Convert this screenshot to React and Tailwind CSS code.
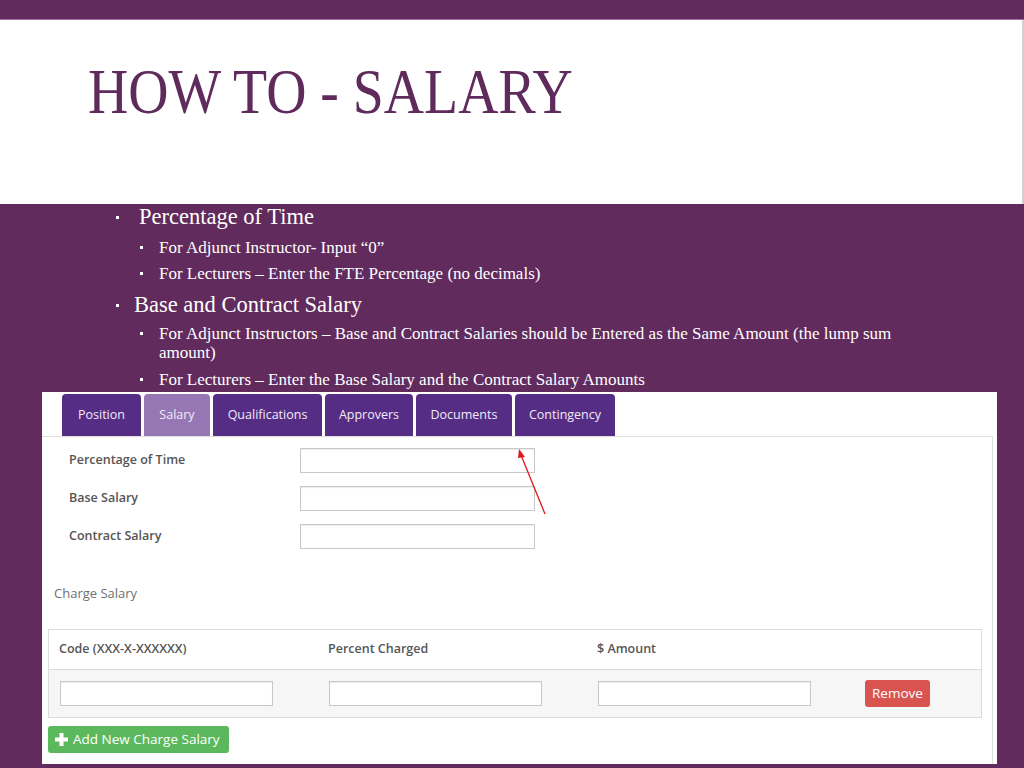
import React from 'react';

const serif = { fontFamily: '"Liberation Serif", "Times New Roman", serif' };
const sans = { fontFamily: '"Open Sans", "Noto Sans", sans-serif' };

const TABS = [
  { label: 'Position', w: 'w-[79px]' },
  { label: 'Salary', w: 'w-[66px]', active: true },
  { label: 'Qualifications', w: 'w-[109px]' },
  { label: 'Approvers', w: 'w-[88px]' },
  { label: 'Documents', w: 'w-[96px]' },
  { label: 'Contingency', w: 'w-[100px]' },
];

const FIELDS = ['Percentage of Time', 'Base Salary', 'Contract Salary'];

function Dot({ className = '' }) {
  return <span className={`inline-block w-[3px] h-[3px] bg-white shrink-0 ${className}`} />;
}

function SubBullet({ children, className = '' }) {
  return (
    <div className={`flex items-start pl-[140px] text-[17px] leading-[19px] text-white ${className}`}>
      <Dot className="mt-[8px]" />
      <span className="ml-[16px] max-w-[765px]">{children}</span>
    </div>
  );
}

function TextBox({ className = '' }) {
  return <div className={`h-[25px] bg-white border border-[#c8c8c8] shadow-[inset_0_1px_1px_rgba(0,0,0,0.08)] ${className}`} />;
}

export default function App() {
  return (
    <div className="w-[1024px] h-[768px] overflow-hidden bg-[#612b5e]" style={serif}>
      {/* top strip */}
      <div className="h-[19px] bg-[#612b5e]" />
      <div className="h-[1px] bg-[#a56ea0]" />

      {/* title area */}
      <div className="h-[184px] bg-white border-r-2 border-[#d0d0d0] flex items-center pl-[88px] pb-[40px]">
        <h1 className="text-[63px] leading-none text-[#5f2a5c] scale-x-[0.885] origin-left whitespace-nowrap">
          HOW TO - SALARY
        </h1>
      </div>

      {/* bullets */}
      <div className="flex items-center h-[26px] pl-[116px] text-[22.5px] text-white">
        <Dot />
        <span className="ml-[20px]">Percentage of Time</span>
      </div>
      <SubBullet className="mt-[8px]">For Adjunct Instructor- Input “0”</SubBullet>
      <SubBullet className="mt-[7px]">For Lecturers – Enter the FTE Percentage (no decimals)</SubBullet>
      <div className="flex items-center h-[26px] mt-[9px] pl-[116px] text-[22.5px] text-white">
        <Dot />
        <span className="ml-[15px]">Base and Contract Salary</span>
      </div>
      <SubBullet className="mt-[6px]">
        For Adjunct Instructors – Base and Contract Salaries should be Entered as the Same Amount (the lump sum amount)
      </SubBullet>
      <SubBullet className="mt-[8px]">For Lecturers – Enter the Base Salary and the Contract Salary Amounts</SubBullet>

      {/* embedded screenshot */}
      <div className="ml-[42px] mt-[3px] w-[955px] h-[372px] bg-white flex flex-col" style={sans}>
        {/* tabs */}
        <div className="flex items-end gap-[3px] pl-[20px] pt-[2px] border-b border-[#dedede] mr-[4px]">
          {TABS.map((t) => (
            <div
              key={t.label}
              className={`${t.w} h-[42px] rounded-t-[4px] flex items-center justify-center text-[12.5px] text-[#f1eaf7] ${
                t.active ? 'bg-[#9777b3]' : 'bg-[#562d85]'
              }`}
            >
              {t.label}
            </div>
          ))}
        </div>

        {/* panel */}
        <div className="relative flex-1 mr-[4px] border-r border-[#e2e2e2] flex flex-col">
          <div className="flex flex-col gap-[13px] pt-[11px] pl-[27px]">
            {FIELDS.map((f) => (
              <div key={f} className="flex items-center h-[25px]">
                <span className="w-[231px] text-[12.5px] font-semibold text-[#555]">{f}</span>
                <TextBox className="w-[235px]" />
              </div>
            ))}
          </div>

          {/* red arrow */}
          <svg className="absolute left-[470px] top-[4px]" width="40" height="80" viewBox="0 0 40 80">
            <line x1="33" y1="73" x2="9" y2="14" stroke="#e0181b" strokeWidth="1.3" />
            <polygon points="7,8 13,16 6,17" fill="#e0181b" />
          </svg>

          <div className="mt-[35px] pl-[12px] text-[13px] text-[#707070]">Charge Salary</div>

          {/* charge table */}
          <div className="mt-[25px] ml-[6px] w-[934px] border border-[#dcdcdc]">
            <div className="flex items-center h-[40px] border-b border-[#dcdcdc] text-[12.5px] font-semibold text-[#555]">
              <span className="pl-[10px] w-[279px]">Code (XXX-X-XXXXXX)</span>
              <span className="w-[269px]">Percent Charged</span>
              <span>$ Amount</span>
            </div>
            <div className="flex items-center h-[47px] bg-[#f6f6f6] pl-[11px]">
              <TextBox className="w-[213px]" />
              <TextBox className="w-[213px] ml-[56px]" />
              <TextBox className="w-[213px] ml-[56px]" />
              <div className="ml-[54px] h-[27px] px-[7px] rounded-[3px] bg-[#d9534f] text-white text-[13.5px] flex items-center">
                Remove
              </div>
            </div>
          </div>

          <div className="mt-[8px] ml-[6px] w-[181px] h-[27px] rounded-[3px] bg-[#5cb85c] text-white text-[13.5px] flex items-center pl-[7px] gap-[5px]">
            <svg width="13" height="13" viewBox="0 0 13 13">
              <path d="M4.5 0h4v4.5H13v4H8.5V13h-4V8.5H0v-4h4.5z" fill="#fff" />
            </svg>
            <span>Add New Charge Salary</span>
          </div>
        </div>
      </div>
    </div>
  );
}
